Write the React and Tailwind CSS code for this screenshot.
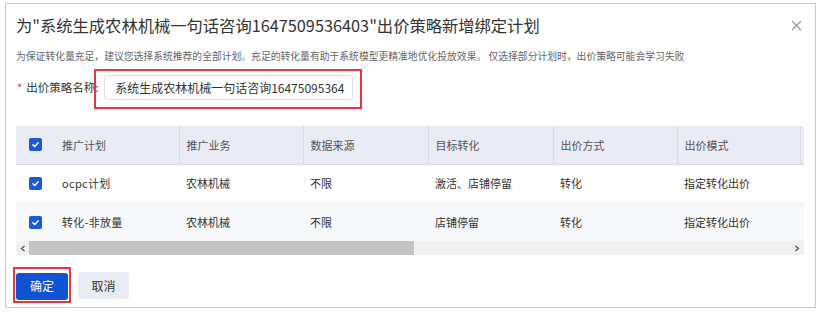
import React from 'react';

const FONT = { fontFamily: '"Noto Sans CJK SC", "Noto Sans", sans-serif' };

const columns = [
  { key: 'plan', title: '推广计划', w: 'w-[124px]' },
  { key: 'biz', title: '推广业务', w: 'w-[124px]' },
  { key: 'source', title: '数据来源', w: 'w-[125px]' },
  { key: 'target', title: '目标转化', w: 'w-[125px]' },
  { key: 'bidWay', title: '出价方式', w: 'w-[124px]' },
  { key: 'bidMode', title: '出价模式', w: 'w-[123px]' },
  { key: 'more', title: '', w: 'w-[124px]' },
];

const rows = [
  { id: 1, plan: 'ocpc计划', biz: '农林机械', source: '不限', target: '激活、店铺停留', bidWay: '转化', bidMode: '指定转化出价', more: '' },
  { id: 2, plan: '转化-非放量', biz: '农林机械', source: '不限', target: '店铺停留', bidWay: '转化', bidMode: '指定转化出价', more: '' },
];

function Check() {
  return (
    <span className="flex items-center justify-center w-[13px] h-[13px] rounded-[2px] bg-[#1b5ad6]">
      <svg width="9" height="9" viewBox="0 0 10 10" fill="none">
        <path d="M2 5.2 L4.2 7.3 L8 3" stroke="white" strokeWidth="1.5" strokeLinecap="round" strokeLinejoin="round" />
      </svg>
    </span>
  );
}

export default function App() {
  return (
    <div className="w-[823px] h-[314px] bg-white pt-[3px] pl-[5px]" style={FONT}>
      <div className="w-[811px] h-[305px] border border-[#c9c9c9] pl-[10px] pr-[11px]">
        {/* title */}
        <div className="flex items-center justify-between pt-[9px]">
          <h1 className="text-[16.3px] leading-[24px] text-[#333]">
            为"系统生成农林机械一句话咨询1647509536403"出价策略新增绑定计划
          </h1>
          <svg width="11" height="11" viewBox="0 0 11 11" className="mr-[2px]">
            <path d="M1 1 L10 10 M10 1 L1 10" stroke="#9a9a9a" strokeWidth="1.2" />
          </svg>
        </div>
        <p className="mt-[12px] text-[9.8px] leading-[14px] text-[#666] whitespace-nowrap">
          为保证转化量充足，建议您选择系统推荐的全部计划。充足的转化量有助于系统模型更精准地优化投放效果。 仅选择部分计划时，出价策略可能会学习失败
        </p>

        {/* name field */}
        <div className="flex items-center mt-[12px] h-[25px]">
          <span className="text-[#e53935] text-[11px] ml-[1px] mr-[4px]">*</span>
          <span className="text-[11.5px] text-[#333] w-[78px]">出价策略名称:</span>
          <div className="relative">
            <div className="w-[249px] h-[25px] border border-[#dcdfe6] rounded-[3px] pl-[10px] pr-[2px] flex items-center overflow-hidden">
              <span className="text-[12px] text-[#333] whitespace-nowrap">系统生成农林机械一句话咨询16475095364</span>
            </div>
            <div className="absolute -left-[10px] -right-[9px] -top-[6px] -bottom-[9px] border-2 border-[#e8353a]" />
          </div>
        </div>

        {/* table */}
        <div className="mt-[26px] w-[788px] overflow-hidden">
          <table className="table-fixed border-collapse text-[11px] w-[906px]">
            <thead>
              <tr className="bg-[#e9ecf4] h-[38px] border-b border-[#d7dbe6]">
                <th className="w-[39px] pl-[13px] text-left font-normal">
                  <Check />
                </th>
                {columns.map((c, i) => (
                  <th
                    key={c.key}
                    className={`${c.w} text-left font-normal text-[#555] ${i === 0 ? 'pl-[7px]' : 'pl-[7px] border-l border-[#d7dbe6]'}`}
                  >
                    {c.title}
                  </th>
                ))}
              </tr>
            </thead>
            <tbody>
              {rows.map((r, idx) => (
                <tr key={r.id} className={idx === 0 ? 'bg-white border-b border-[#eceef3] h-[39px]' : 'bg-[#f7f8fa] h-[38px]'}>
                  <td className="pl-[13px]">
                    <Check />
                  </td>
                  {columns.map((c) => (
                    <td key={c.key} className={`pl-[7px] text-[#333] ${c.key === 'plan' ? 'tracking-[0.3px]' : ''}`}>
                      {r[c.key]}
                    </td>
                  ))}
                </tr>
              ))}
            </tbody>
          </table>
          {/* scrollbar */}
          <div className="flex items-center h-[14px] bg-[#f1f1f1]">
            <div className="w-[13px] flex items-center justify-center">
              <svg width="6" height="7" viewBox="0 0 6 7">
                <path d="M4.5 1 L1.5 3.5 L4.5 6" stroke="#555" strokeWidth="1.3" fill="none" />
              </svg>
            </div>
            <div className="w-[385px] h-[14px] bg-[#c3c3c3]" />
            <div className="flex-1" />
            <div className="w-[14px] flex items-center justify-center">
              <svg width="6" height="7" viewBox="0 0 6 7">
                <path d="M1.5 1 L4.5 3.5 L1.5 6" stroke="#555" strokeWidth="1.3" fill="none" />
              </svg>
            </div>
          </div>
        </div>

        {/* footer */}
        <div className="flex items-center gap-[10px] mt-[17px]">
          <div className="relative">
            <button className="w-[52px] h-[27px] rounded-[3px] bg-[#0f53d3] text-white text-[12px]">确定</button>
            <div className="absolute -left-[3px] -right-[3px] -top-[5px] -bottom-[3px] border-2 border-[#e8353a]" />
          </div>
          <button className="w-[51px] h-[27px] rounded-[3px] bg-[#e9ecf3] text-[#333] text-[12px]">取消</button>
        </div>
      </div>
    </div>
  );
}
